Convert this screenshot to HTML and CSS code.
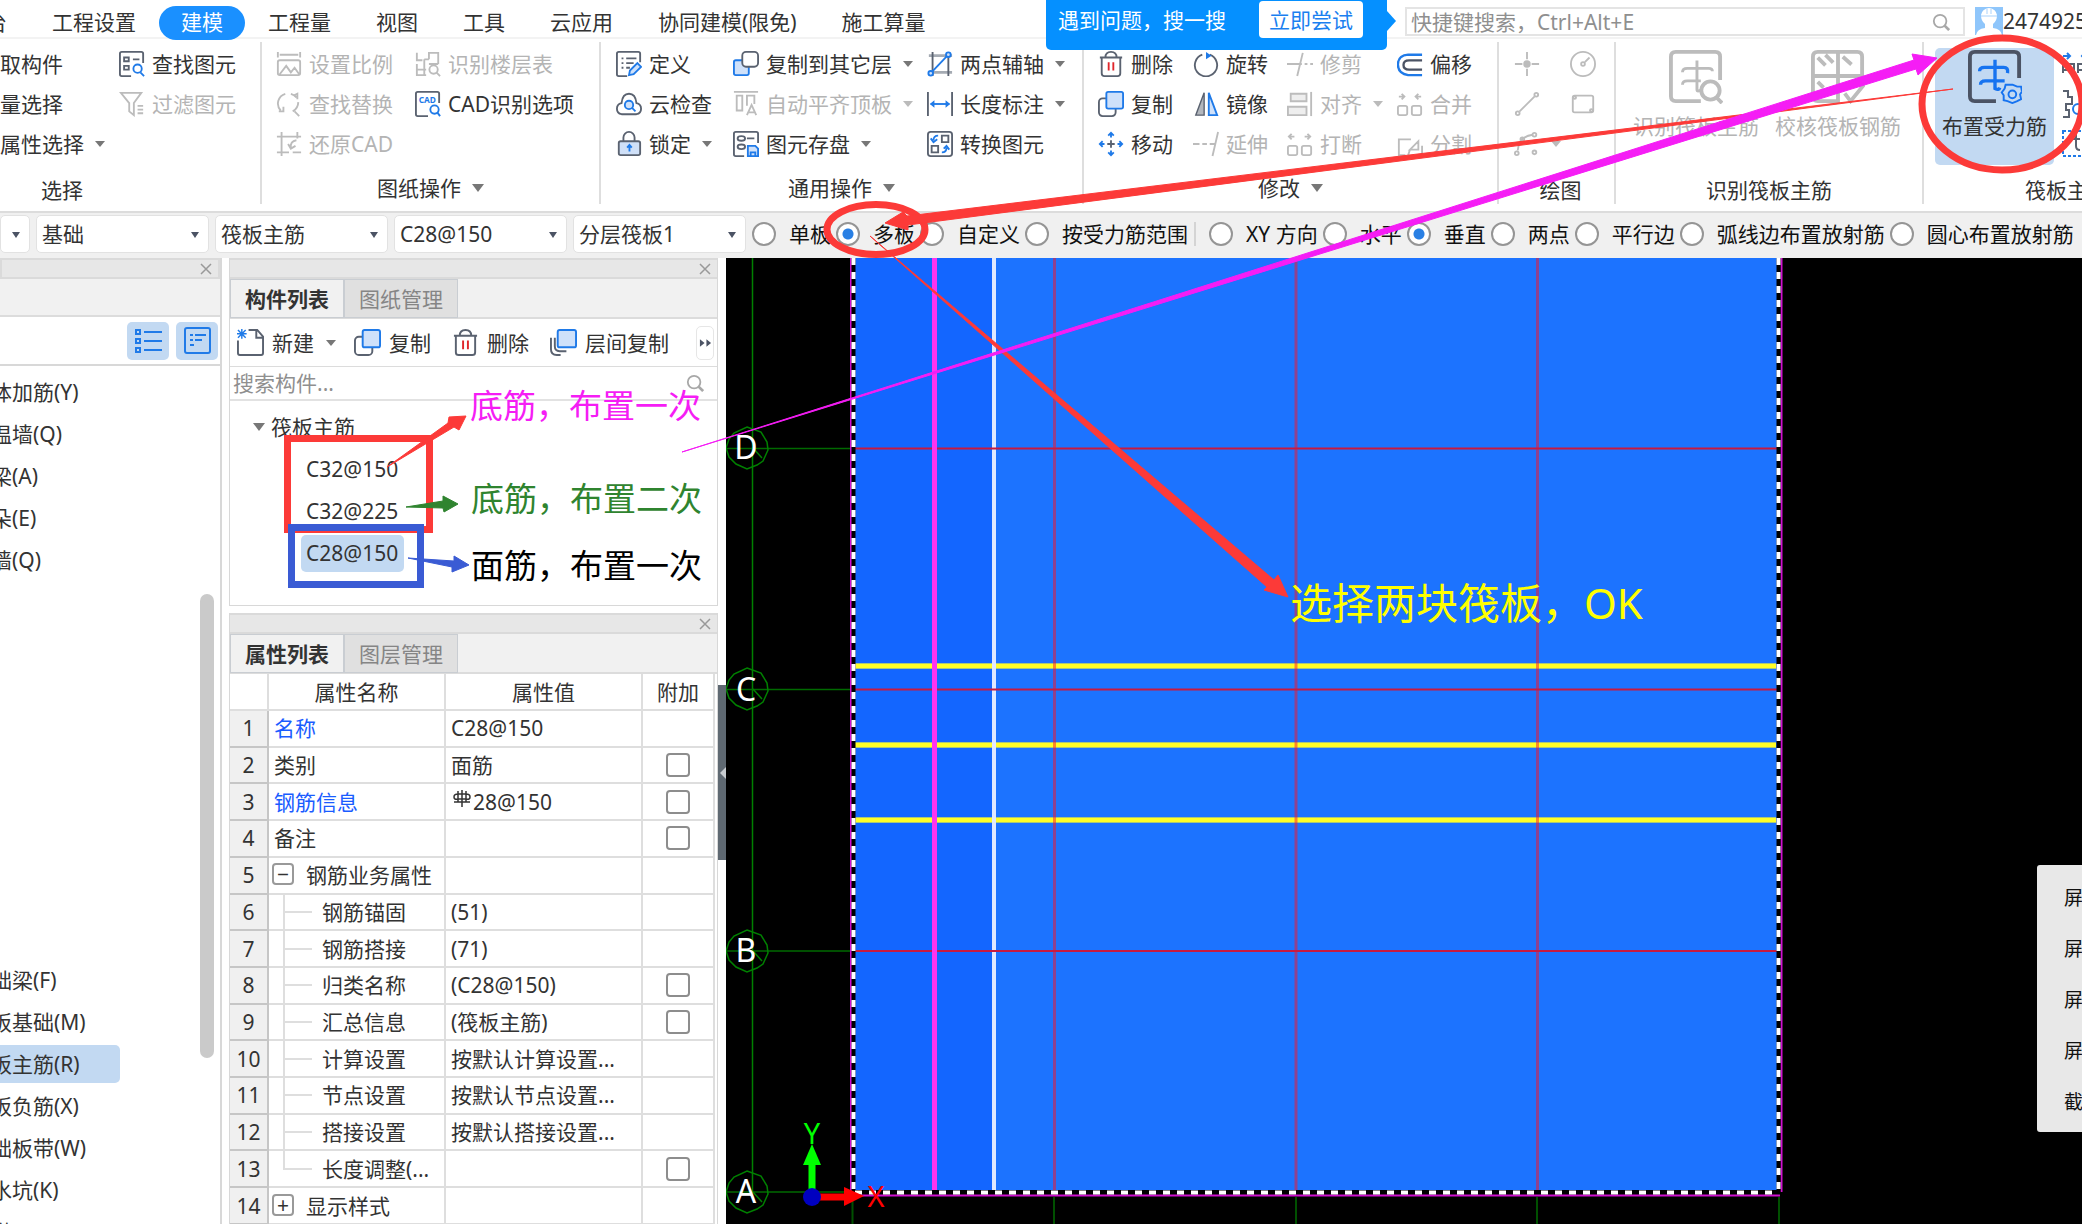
FILE: index.html
```html
<!DOCTYPE html>
<html lang="zh-CN">
<head>
<meta charset="utf-8">
<title>建模 - 筏板主筋</title>
<link rel="stylesheet" href="styles.css">
</head>
<body>
<svg class="defs" aria-hidden="true">
  <symbol id="i-find" viewBox="0 0 28 28"><path d="M26 13V3a2 2 0 0 0-2-2H3a2 2 0 0 0-2 2v22a2 2 0 0 0 2 2h10" class="d"/><path d="M5.500 7h5v4h-5zM5.500 16h5v4h-5zM15 9h7" class="d"/><circle cx="20" cy="19" r="4.500" class="b"/><path d="M23 23l4 4" class="b"/></symbol>
  <symbol id="i-filter" viewBox="0 0 28 28"><path d="M2 2h22l-8 11v13l-5-4v-9zM20 16h6M20 20h6M20 24h6" class="g"/></symbol>
  <symbol id="i-scale" viewBox="0 0 28 28"><path d="M2 1v6M26 1v6M4 4h20M4 10h20q2 0 2 2v12q0 2-2 2H4q-2 0-2-2V12q0-2 2-2zM4 25l7-9 5 7 4-5 5 7" class="g"/></symbol>
  <symbol id="i-floors" viewBox="0 0 28 28"><path d="M2 2v8h6M15 9V2h10v12M15 9h-5M2 14v12h10M2 20h10M10 9v17M15 14h10" class="g"/><circle cx="20" cy="20" r="4.500" class="g"/><path d="M23 23l4 4" class="g"/></symbol>
  <symbol id="i-replace" viewBox="0 0 28 28"><path d="M10 3A11 11 0 0 0 5 21M3 22h5v-5M16 3a11 11 0 0 1 6 4m2 5a12 12 0 0 1-6 10M19 5l4-2v6M20 22l5 5" class="g"/></symbol>
  <symbol id="i-cad" viewBox="0 0 28 28"><path d="M26 13V3a2 2 0 0 0-2-2H3a2 2 0 0 0-2 2v22a2 2 0 0 0 2 2h11" class="d"/><text x="4" y="13" font-size="9" font-weight="700" fill="#1f7ae8">CAD</text><circle cx="21" cy="20" r="4.500" class="b"/><path d="M24 23l3 4" class="b"/></symbol>
  <symbol id="i-restore" viewBox="0 0 28 28"><path d="M1 6h26M6 1v26M1 23h13M18 23h9M23 1v7M22 10q-7 1-6 8M13 14l3 5 5-3" class="g"/></symbol>
  <symbol id="i-define" viewBox="0 0 28 28"><path d="M26 12V3a2 2 0 0 0-2-2H3a2 2 0 0 0-2 2v22a2 2 0 0 0 2 2h9M6 8h2M11 8h11M6 13h2M11 13h8M6 18h2M11 18h4" class="d"/><path d="M14 26l1-5 8-8 4 4-8 8z" class="bf"/></symbol>
  <symbol id="i-cloud" viewBox="0 0 28 28"><path d="M6 25q-5-1-5-6t5-6Q7 3 14 3t8 10q5 1 5 6t-5 6z" class="d"/><circle cx="14" cy="15" r="4.500" class="bf"/><path d="M17 18l4 4" class="b"/></symbol>
  <symbol id="i-lock" viewBox="0 0 28 28"><path d="M8 11V7a6 6 0 0 1 12 0v4" class="d"/><rect x="3" y="11" width="23" height="15" rx="2" class="df"/><path d="M14.500 22v-6M12 18l2.500-3 2.500 3" class="b"/></symbol>
  <symbol id="i-copyup" viewBox="0 0 28 28"><rect x="1" y="10" width="16" height="16" rx="2" class="bf"/><rect x="10" y="1" width="17" height="16" rx="4" class="dw"/></symbol>
  <symbol id="i-align" viewBox="0 0 28 28"><path d="M1 1h26M4 5h6v16H4zM15 16V5h8v9M15 26l5-11 5 11M17 23h6" class="g"/></symbol>
  <symbol id="i-store" viewBox="0 0 28 28"><path d="M27 13V3a2 2 0 0 0-2-2H3a2 2 0 0 0-2 2v22a2 2 0 0 0 2 2h9M15 8h8" class="d"/><ellipse cx="9" cy="8" rx="4" ry="2.500" class="d"/><ellipse cx="9" cy="17" rx="4" ry="2.500" class="d"/><path d="M16 16h8l3 3v8H16zM19 27v-4h5v4" class="bf"/></symbol>
  <symbol id="i-axis" viewBox="0 0 28 28"><path d="M2 5h25M2 23h25" stroke="#a5abb3" stroke-width="3"/><path d="M6 1v26M23 1v26" class="d"/><path d="M3 25L23 4" class="b"/><circle cx="23" cy="4" r="2.500" class="bf"/><circle cx="4" cy="24" r="2.500" class="bf"/></symbol>
  <symbol id="i-length" viewBox="0 0 28 28"><path d="M1 1v26M27 1v26" class="d"/><path d="M4 14h20" class="b"/><path d="M8 10l-5 4 5 4zM20 10l5 4-5 4z" fill="#1f7ae8"/></symbol>
  <symbol id="i-convert" viewBox="0 0 28 28"><rect x="1" y="1" width="26" height="26" rx="3" class="d"/><path d="M16 5h7v7h-7zM5 16h7v7H5z" class="d"/><path d="M12 5q-5 0-5 5M4 8l3 4 4-3M16 23q5 0 5-5M18 19l3-3 3 4" class="b"/></symbol>
  <symbol id="i-trash" viewBox="0 0 28 28"><path d="M2 7h24M8 7q0-6 6-6t6 6M4 7v17q0 3 3 3h14q3 0 3-3V7" class="d"/><path d="M11.500 12v9M16.500 12v9" stroke="#e0262b" stroke-width="2"/></symbol>
  <symbol id="i-copy" viewBox="0 0 28 28"><rect x="1" y="8" width="18" height="19" rx="4" class="d"/><rect x="9" y="1" width="18" height="18" rx="2" class="bf"/></symbol>
  <symbol id="i-move" viewBox="0 0 28 28"><path d="M14 10v8M10 14h8" class="d"/><path d="M14 7V2M11 5l3-3 3 3M14 21v5M11 23l3 3 3-3M7 14H2M5 11l-3 3 3 3M21 14h5M23 11l3 3-3 3" class="b"/></symbol>
  <symbol id="i-rotate" viewBox="0 0 28 28"><path d="M18 4a12 12 0 1 1-8 0" class="d"/><path d="M14 1l6 4-6 4z" fill="#1f7ae8"/></symbol>
  <symbol id="i-mirror" viewBox="0 0 28 28"><path d="M12 2v24H3z" fill="#b3b7bd" stroke="#5a6270" stroke-width="1.500"/><path d="M17 2l9 24h-9z" class="bf"/></symbol>
  <symbol id="i-extend" viewBox="0 0 28 28"><path d="M0 14h7M10 14h5M18 14h6M27 1l-6 26" class="g"/></symbol>
  <symbol id="i-trim" viewBox="0 0 28 28"><path d="M0 14h16M17 2l-6 25M19 14h3M25 14h3" class="g"/></symbol>
  <symbol id="i-alignr" viewBox="0 0 28 28"><path d="M4 3h17v8H4zM1 17h20v9H1z" class="gf"/><path d="M26 1v26" class="g"/></symbol>
  <symbol id="i-break" viewBox="0 0 28 28"><rect x="1" y="16" width="10" height="10" rx="2" class="g"/><rect x="16" y="16" width="10" height="10" rx="2" class="g"/><path d="M8 6H2M5 3L2 6l3 3M19 6h6M22 3l3 3-3 3" class="g"/></symbol>
  <symbol id="i-merge" viewBox="0 0 28 28"><rect x="1" y="16" width="10" height="10" rx="2" class="g"/><rect x="16" y="16" width="10" height="10" rx="2" class="g"/><path d="M2 6h6M5 3l3 3-3 3M26 6h-6M23 3l-3 3 3 3" class="g"/></symbol>
  <symbol id="i-offset" viewBox="0 0 28 28"><path d="M27 4H12Q1 5 1 14.500T12 26h15" stroke="#1f7ae8" stroke-width="2.500" fill="none"/><path d="M27 10H13q-6 0-6 5t6 5h14" stroke="#4b5364" stroke-width="2.500" fill="none"/></symbol>
  <symbol id="i-split" viewBox="0 0 28 28"><path d="M15 9H2v17h7M27 16v10h-7M14 20l9-9v9zM14 20l-2 6" class="g"/></symbol>
  <symbol id="i-point" viewBox="0 0 28 28"><path d="M14 1v8M14 19v8M1 14h8M19 14h8" class="g"/><circle cx="14" cy="14" r="4" fill="#bcbcbc"/></symbol>
  <symbol id="i-circle" viewBox="0 0 28 28"><circle cx="14" cy="14" r="13" class="g"/><circle cx="14" cy="14" r="2" class="g"/><path d="M16 12l5-5" class="g"/></symbol>
  <symbol id="i-line" viewBox="0 0 28 28"><circle cx="24" cy="4" r="2" class="g"/><circle cx="4" cy="24" r="2" class="g"/><path d="M6 22L22 6" class="g"/></symbol>
  <symbol id="i-rect" viewBox="0 0 28 28"><rect x="3" y="5" width="22" height="18" rx="2" class="g"/><circle cx="5" cy="7" r="1.500" class="g"/><circle cx="23" cy="21" r="1.500" class="g"/></symbol>
  <symbol id="i-arc" viewBox="0 0 28 28"><path d="M4 21Q5 6 20 4" class="g"/><circle cx="22" cy="4" r="2" class="g"/><circle cx="3" cy="24" r="2" class="g"/><circle cx="9" cy="9" r="2" class="g"/><circle cx="22" cy="23" r="2" class="g"/></symbol>
  <symbol id="i-new" viewBox="0 0 28 28"><path d="M1 12v13q0 2 2 2h22q2 0 2-2V8l-6-7H12M20 1v8h7" class="d"/><path d="M1 1l8 8M9 1L1 9M5 0v10M0 5h10" stroke="#1f7ae8" stroke-width="1.500"/></symbol>
  <symbol id="i-layers" viewBox="0 0 28 28"><path d="M1 9v12q0 6 6 6h4M5 9v9q0 5 5 5h7" class="d"/><rect x="8" y="1" width="19" height="18" rx="2" class="bf"/></symbol>
  <symbol id="i-search" viewBox="0 0 20 20"><circle cx="9" cy="9" r="7" fill="none" stroke="#a8a8a8" stroke-width="2"/><path d="M14 14l5 5" stroke="#a8a8a8" stroke-width="3"/></symbol>
  <symbol id="i-close" viewBox="0 0 12 12"><path d="M1 1l10 10M11 1L1 11" stroke="#999" stroke-width="1.500"/></symbol>
</svg>

<header class="topbar">
  <nav class="menu">
    <a href="#">台</a><a href="#">工程设置</a><a href="#" class="on">建模</a><a href="#">工程量</a><a href="#">视图</a><a href="#">工具</a><a href="#">云应用</a><a href="#">协同建模(限免)</a><a href="#">施工算量</a>
  </nav>
  <div class="tip"><span>遇到问题，搜一搜</span><button>立即尝试</button></div>
  <label class="quick"><input type="text" placeholder="快捷键搜索，Ctrl+Alt+E" aria-label="快捷键搜索"><svg class="mag"><use href="#i-search"/></svg></label>
  <div class="user">
    <svg viewBox="0 0 28 28"><rect width="28" height="28" fill="#8fc6fb"/><path d="M1 28q1-6 9-7v-4Q6 14 6 8q1-6 8-7 7 1 8 7 0 6-4 9v4q8 1 9 7z" fill="#fff"/><path d="M6 9h16M12 2v5M16 2v5" stroke="#a9d2fb" fill="none"/></svg>
    <span>2474925</span>
  </div>
</header>

<div class="ribbon">
  <section class="group g1">
    <div class="cells">
      <button>取构件</button><button><svg><use href="#i-find"/></svg>查找图元</button>
      <button>量选择</button><button disabled><svg><use href="#i-filter"/></svg>过滤图元</button>
      <button>属性选择<i class="tri"></i></button>
    </div>
    <h2 class="low">选择</h2>
  </section>
  <section class="group g2">
    <div class="cells">
      <button disabled><svg><use href="#i-scale"/></svg>设置比例</button><button disabled><svg><use href="#i-floors"/></svg>识别楼层表</button>
      <button disabled><svg><use href="#i-replace"/></svg>查找替换</button><button><svg><use href="#i-cad"/></svg>CAD识别选项</button>
      <button disabled><svg><use href="#i-restore"/></svg>还原CAD</button>
    </div>
    <h2>图纸操作<i class="tri wide"></i></h2>
  </section>
  <section class="group g3">
    <div class="cells">
      <button><svg><use href="#i-define"/></svg>定义</button><button><svg><use href="#i-copyup"/></svg>复制到其它层<i class="tri"></i></button><button><svg><use href="#i-axis"/></svg>两点辅轴<i class="tri"></i></button>
      <button><svg><use href="#i-cloud"/></svg>云检查</button><button disabled><svg><use href="#i-align"/></svg>自动平齐顶板<i class="tri"></i></button><button><svg><use href="#i-length"/></svg>长度标注<i class="tri"></i></button>
      <button><svg><use href="#i-lock"/></svg>锁定<i class="tri"></i></button><button><svg><use href="#i-store"/></svg>图元存盘<i class="tri"></i></button><button><svg><use href="#i-convert"/></svg>转换图元</button>
    </div>
    <h2>通用操作<i class="tri wide"></i></h2>
  </section>
  <section class="group g4">
    <div class="cells">
      <button><svg><use href="#i-trash"/></svg>删除</button><button><svg><use href="#i-rotate"/></svg>旋转</button><button disabled><svg><use href="#i-trim"/></svg>修剪</button><button><svg><use href="#i-offset"/></svg>偏移</button>
      <button><svg><use href="#i-copy"/></svg>复制</button><button><svg><use href="#i-mirror"/></svg>镜像</button><button disabled><svg><use href="#i-alignr"/></svg>对齐<i class="tri"></i></button><button disabled><svg><use href="#i-merge"/></svg>合并</button>
      <button><svg><use href="#i-move"/></svg>移动</button><button disabled><svg><use href="#i-extend"/></svg>延伸</button><button disabled><svg><use href="#i-break"/></svg>打断</button><button disabled><svg><use href="#i-split"/></svg>分割</button>
    </div>
    <h2>修改<i class="tri wide"></i></h2>
  </section>
  <section class="group g5">
    <div class="cells">
      <button disabled aria-label="点"><svg><use href="#i-point"/></svg></button><button disabled aria-label="圆"><svg><use href="#i-circle"/></svg></button>
      <button disabled aria-label="直线"><svg><use href="#i-line"/></svg></button><button disabled aria-label="矩形"><svg><use href="#i-rect"/></svg></button>
      <button disabled aria-label="弧"><svg><use href="#i-arc"/></svg><i class="tri"></i></button>
    </div>
    <h2 class="low">绘图</h2>
  </section>
  <section class="group g6">
    <div class="bigs">
      <button class="big" disabled>
        <svg viewBox="0 0 56 56" fill="none" stroke="#bcbcbc" stroke-width="4"><path d="M53 31V7q0-5-5-5H7Q2 2 2 7v41q0 5 5 5h26"/><path d="M29 11v30q0 3 5 0M14 23q0-4 5-4h22q4 0 4 3M14 36q0-4 5-4h14" stroke-width="3"/><circle cx="43" cy="42" r="9.500"/><path d="M49 49l6 6"/></svg>
        识别筏板主筋</button>
      <button class="big" disabled>
        <svg viewBox="0 0 56 56" fill="none" stroke="#bcbcbc" stroke-width="4"><path d="M53 36V7q0-5-5-5H7Q2 2 2 7v41q0 5 5 5h21V2M2 27h51M7 8l8 8M15 5l8 8M33 7l9 8M7 33l6 6M35 45l6 8 14-17"/></svg>
        校核筏板钢筋</button>
    </div>
    <h2 class="low">识别筏板主筋</h2>
  </section>
  <section class="group g7">
    <div class="bigs">
      <button class="big active">
        <svg viewBox="0 0 56 56" fill="none" stroke="#4b5364" stroke-width="4"><path d="M53 29V7q0-5-5-5H7Q2 2 2 7v41q0 5 5 5h22"/><path d="M28 10v30q4 2 5-1M12 22q0-4 5-4h20q5 0 4 6M13 36q0-4 5-4h20" stroke="#1673f0" stroke-width="3.500"/><path d="M46 36l5 2 4 0 1 5-2 3 1 5-4 2-5 2-5-2-4-1 0-5-2-3 3-4 1-4z" stroke="#1673f0" stroke-width="2"/><circle cx="46" cy="46" r="4" stroke="#1673f0" stroke-width="2"/></svg>
        布置受力筋</button>
      <div class="side">
        <svg viewBox="0 0 28 28"><path d="M1 6h6M5 3l3 3-3 3M26 6h-6M23 3l-3 3 3 3" class="b"/><path d="M1 23V14h11v9M16 23V14h11v9M1 20h11M16 20h11" class="d"/></svg>
        <svg viewBox="0 0 28 28"><path d="M1 1h5v6h4v7H4v6h3v7H1" class="d"/><circle cx="16" cy="19" r="5" class="b"/></svg>
        <svg viewBox="0 0 28 28"><rect x="1" y="1" width="34" height="25" class="b" stroke-dasharray="3 2"/><path d="M14 4v12q0 4 4 4M10 9h8" class="d"/></svg>
      </div>
    </div>
    <h2 class="low">筏板主筋</h2>
  </section>
</div>

<form class="options">
  <span class="sel first"><select aria-label="楼层"><option></option></select></span>
  <span class="sel"><select aria-label="构件大类"><option>基础</option></select></span>
  <span class="sel"><select aria-label="构件类型"><option>筏板主筋</option></select></span>
  <span class="sel"><select aria-label="构件"><option>C28@150</option></select></span>
  <span class="sel"><select aria-label="分层"><option>分层筏板1</option></select></span>
  <div class="radios">
    <label><input type="radio" name="range">单板</label>
    <label><input type="radio" name="range" checked>多板</label>
    <label><input type="radio" name="range">自定义</label>
    <label><input type="radio" name="range">按受力筋范围</label>
  </div>
  <div class="radios way">
    <label><input type="radio" name="way">XY 方向</label>
    <label><input type="radio" name="way">水平</label>
    <label><input type="radio" name="way" checked>垂直</label>
    <label><input type="radio" name="way">两点</label>
    <label><input type="radio" name="way">平行边</label>
    <label><input type="radio" name="way">弧线边布置放射筋</label>
    <label><input type="radio" name="way">圆心布置放射筋</label>
  </div>
</form>

<main class="work">
  <aside class="nav">
    <div class="cap"><svg class="x"><use href="#i-close"/></svg></div>
    <div class="strip"></div>
    <div class="views">
      <button aria-label="列表"><svg viewBox="0 0 28 28"><path d="M10 5h18M10 14h18M10 23h18" class="b"/><path d="M2 3h4v4H2zM2 12h4v4H2zM2 21h4v4H2z" class="b"/></svg></button>
      <button aria-label="详情"><svg viewBox="0 0 28 28"><rect x="2" y="1" width="25" height="25" rx="2" class="b"/><path d="M7 8h3M12 8h11M7 13h3M12 13h7M7 18h4" class="b"/></svg></button>
    </div>
    <div class="tree">
      <ul><li>体加筋(Y)</li><li>温墙(Q)</li><li>梁(A)</li><li>朵(E)</li><li>墙(Q)</li></ul>
      <ul><li>础梁(F)</li><li>板基础(M)</li><li class="cur">板主筋(R)</li><li>板负筋(X)</li><li>础板带(W)</li><li>水坑(K)</li><li>墩(D)</li></ul>
      <span class="thumb"></span>
    </div>
  </aside>

  <div class="mid">
    <section class="panel list">
      <div class="cap"><svg class="x"><use href="#i-close"/></svg></div>
      <div class="tabs"><button class="on">构件列表</button><button>图纸管理</button></div>
      <div class="tools">
        <button><svg><use href="#i-new"/></svg>新建<i class="tri"></i></button>
        <button><svg><use href="#i-copy"/></svg>复制</button>
        <button><svg><use href="#i-trash"/></svg>删除</button>
        <button><svg><use href="#i-layers"/></svg>层间复制</button>
        <button class="more" aria-label="更多"><svg viewBox="0 0 14 10"><path d="M1 1l5 4-5 4zM8 1l5 4-5 4z" fill="#4b5364"/></svg></button>
      </div>
      <label class="find"><input type="text" placeholder="搜索构件..." aria-label="搜索构件"><svg class="mag"><use href="#i-search"/></svg></label>
      <div class="parts">
        <p><i class="tri wide"></i>筏板主筋</p>
        <ul><li>C32@150</li><li>C32@225</li><li><mark>C28@150</mark></li></ul>
      </div>
    </section>

    <section class="panel props">
      <div class="cap"><svg class="x"><use href="#i-close"/></svg></div>
      <div class="tabs"><button class="on">属性列表</button><button>图层管理</button></div>
      <table>
        <thead><tr><th></th><th>属性名称</th><th>属性值</th><th>附加</th></tr></thead>
        <tbody>
          <tr><th>1</th><td class="link">名称</td><td>C28@150</td><td></td></tr>
          <tr><th>2</th><td>类别</td><td>面筋</td><td><input type="checkbox" aria-label="类别附加"></td></tr>
          <tr><th>3</th><td class="link">钢筋信息</td><td><svg class="bar" viewBox="0 0 18 18"><path d="M9 0v17M1 12h16M5 1v11M13 1v11M5 4q-4 0-4 3t4 2h8q4 1 4-2t-4-3z" fill="none" stroke="#333" stroke-width="1.500"/></svg>28@150</td><td><input type="checkbox" aria-label="钢筋信息附加"></td></tr>
          <tr><th>4</th><td>备注</td><td></td><td><input type="checkbox" aria-label="备注附加"></td></tr>
          <tr><th>5</th><td><button class="fold">−</button>钢筋业务属性</td><td></td><td></td></tr>
          <tr class="sub"><th>6</th><td>钢筋锚固</td><td>(51)</td><td></td></tr>
          <tr class="sub"><th>7</th><td>钢筋搭接</td><td>(71)</td><td></td></tr>
          <tr class="sub"><th>8</th><td>归类名称</td><td>(C28@150)</td><td><input type="checkbox" aria-label="归类名称附加"></td></tr>
          <tr class="sub"><th>9</th><td>汇总信息</td><td>(筏板主筋)</td><td><input type="checkbox" aria-label="汇总信息附加"></td></tr>
          <tr class="sub"><th>10</th><td>计算设置</td><td>按默认计算设置...</td><td></td></tr>
          <tr class="sub"><th>11</th><td>节点设置</td><td>按默认节点设置...</td><td></td></tr>
          <tr class="sub"><th>12</th><td>搭接设置</td><td>按默认搭接设置...</td><td></td></tr>
          <tr class="sub last"><th>13</th><td>长度调整(...</td><td></td><td><input type="checkbox" aria-label="长度调整附加"></td></tr>
          <tr><th>14</th><td><button class="fold">+</button>显示样式</td><td></td><td></td></tr>
        </tbody>
      </table>
    </section>
  </div>

  <div class="splitter"><button aria-label="收起"></button></div>

  <div class="stage">
    <svg class="drawing" viewBox="726 258 1356 966" preserveAspectRatio="xMinYMin slice">
      <rect x="855" y="258" width="139" height="933" fill="#1366ff"/>
      <rect x="994" y="258" width="783" height="933" fill="#1c73ff"/>
      <g stroke="#008000" stroke-width="1.500" fill="none">
        <path d="M752.500 258V1192"/>
        <path d="M726 448.500H851M726 689.500H851M726 951H851M726 1192H851" stroke="#006a00"/>
        <path d="M852.500 1197V1224M1054 1197V1224M1296 1197V1224M1537 1197V1224M1779 1197V1224" stroke="#005000" stroke-width="2"/>
        <g id="ring"><path d="M747 427l14 5 6 10 1 8-5 11-6 4-10 4-11-5-7-7-3-9 3-9 5-6zM753 448l9 10"/></g>
        <use href="#ring" y="241"/><use href="#ring" y="503"/><use href="#ring" y="744"/>
      </g>
      <g class="axis"><text x="746" y="459">D</text><text x="746" y="701">C</text><text x="746" y="962">B</text><text x="746" y="1203">A</text></g>
      <path d="M855 666H1776M855 745H1776M855 820H1776" stroke="#a9c878" stroke-width="6"/>
      <path d="M855 666H1776M855 745H1776M855 820H1776" stroke="#ffff28" stroke-width="4"/>
      <path d="M994 258V1191" stroke="#e0e9ff" stroke-width="4"/>
      <path d="M1054.500 258V1191M1296 258V1191M1537.500 258V1191" stroke="#ff1020" stroke-opacity=".5" stroke-width="3"/>
      <path d="M855 448.500H1777M855 689.500H1777M855 951H1777" stroke="#c81a40" stroke-width="2"/>
      <path d="M934.500 258V1191" stroke="#ff33f0" stroke-width="5"/>
      <path d="M851 258V1192M1781.500 258V1192M853 1195.500H1780" stroke="#d010d0" stroke-width="2" fill="none"/>
      <path d="M853.500 258V1192H1778.500V258" stroke="#000" stroke-width="4" fill="none"/>
      <path d="M853.500 258V1192M1778.500 258V1192M855 1192.500H1777" stroke="#fff" stroke-width="4" stroke-dasharray="7 7" fill="none"/>
      <path d="M812 1190V1164" stroke="#0f0" stroke-width="7"/><path d="M803 1165l9-21 9 21z" fill="#0f0"/>
      <path d="M820 1197H846" stroke="#f00" stroke-width="7"/><path d="M844 1187l20 9-20 10z" fill="#f00"/>
      <circle cx="812" cy="1197" r="9" fill="#0000c0"/>
      <g class="axis xy"><text x="812" y="1144" fill="#0f0">Y</text><text x="876" y="1207" fill="#f00">X</text></g>
    </svg>
    <ul class="popup"><li>屏</li><li>屏</li><li>屏</li><li>屏</li><li>截</li></ul>
  </div>
</main>

<svg class="notes" viewBox="0 0 2082 1224" preserveAspectRatio="xMinYMin slice">
  <g fill="none" stroke-width="7">
    <rect x="287.500" y="438.500" width="142" height="91" stroke="#fc3a38"/>
    <rect x="291.500" y="527.500" width="129" height="57" stroke="#3a5bd4"/>
    <ellipse cx="876" cy="229.500" rx="49" ry="25" stroke="#fc3a38"/>
    <ellipse cx="2002" cy="104" rx="80" ry="66" stroke="#fc3a38"/>
  </g>
  <g fill="#fc3a38" stroke="#fc3a38">
    <path d="M387 467L448 423 449 417 466 416 459 430 454 427Z"/>
    <path d="M1953 89L907 216 903 212 885 223 908 230 908 225Z"/>
    <path d="M870 236L1274 580 1278 575 1288 597 1264 590 1267 587Z"/>
  </g>
  <path d="M682 452L1914 60 1912 54 1937 58 1918 75 1916 69Z" fill="#f51df5" stroke="#f51df5"/>
  <path d="M406 507L443 501 443 496 458 504 444 512 443 508Z" fill="#2f842f" stroke="#2f842f"/>
  <path d="M408 558L454 561 454 556 469 565 452 572 452 567Z" fill="#3a5bd4" stroke="#3a5bd4"/>
  <g class="memo"><text x="470" y="418" fill="#f51df5">底筋，布置一次</text><text x="471" y="511" fill="#2f842f">底筋，布置二次</text><text x="471" y="578" fill="#000">面筋，布置一次</text><text x="1290" y="619" fill="#ff0" class="lg">选择两块筏板，OK</text></g>
</svg>
</body>
</html>
```

FILE: styles.css
```css
* { box-sizing: border-box; }
body {
  margin: 0;
  height: 100vh;
  overflow: hidden;
  position: relative;
  display: flex;
  flex-direction: column;
  background: #fff;
  color: #333;
  font: 21px/24px "Noto Sans", "Noto Sans CJK SC", sans-serif;
}
button, input, select { font: inherit; color: inherit; margin: 0; padding: 0; border: 0; background: none; }
button { white-space: nowrap; }
ul, p, h2 { margin: 0; padding: 0; list-style: none; font: inherit; }
a { color: inherit; text-decoration: none; }
.defs { position: absolute; width: 0; height: 0; }

/* icon strokes */
.d, .df, .dw { fill: none; stroke: #5a6270; stroke-width: 2; }
.df { fill: #cfe0f8; }
.dw { fill: #fff; }
.b, .bf { fill: none; stroke: #1f7ae8; stroke-width: 2; }
.bf { fill: #cfe1fa; }
.g, .gf { fill: none; stroke: #bcbcbc; stroke-width: 2; }
.gf { fill: #eee; }
.tri { display: inline-block; border: 5px solid transparent; border-top: 6px solid #777; border-bottom: 0; flex: none; }
.tri.wide { border-width: 8px 6px 0; }
:disabled .tri { border-top-color: #bbb; }

/* top bar */
.topbar { flex: none; position: relative; z-index: 2; height: 39px; display: flex; border-bottom: 2px solid #f3f3f3; }
.menu { display: flex; gap: 1px; margin-left: -36px; padding-top: 6px; flex: none; }
.menu a { height: 34px; padding: 4px 22px; border-radius: 17px; white-space: nowrap; }
.menu .on { background: #1a90ff; color: #fff; }
.tip { position: absolute; left: 1046px; top: 0; width: 341px; height: 50px; padding: 1px 24px 0 12px; display: flex; justify-content: space-between; background: #0590ff; color: #fff; border-radius: 0 0 5px 5px; }
.tip span { line-height: 38px; }
.tip button { width: 104px; height: 37px; background: #fff; color: #1a7ff0; border-radius: 4px; }
.tip::after { content: ""; position: absolute; left: 100%; top: 11px; border: 10px solid transparent; border-left: 9px solid #0590ff; border-right: 0; }
.quick { margin: 7px 10px 0 auto; width: 560px; height: 29px; display: flex; align-items: center; border: 2px solid #e4e4e4; padding: 0 13px 0 4px; flex: none; }
.quick input, .find input { flex: 1; min-width: 0; outline: 0; }
::placeholder { color: #8f8f8f; opacity: 1; }
.mag { width: 18px; height: 18px; flex: none; }
.user { width: 107px; display: flex; padding-top: 7px; overflow: hidden; flex: none; }
.user svg { width: 28px; height: 28px; flex: none; }
.user span { padding-top: 2px; }

/* ribbon */
.ribbon { flex: none; height: 174px; display: flex; padding-top: 3px; border-bottom: 2px solid #dcdcdc; overflow: hidden; }
.group { flex: none; height: 162px; padding-top: 2px; display: flex; flex-direction: column; border-right: 2px solid #dedede; }
.cells { height: 120px; display: grid; grid-template-rows: repeat(3, 40px); }
.cells button { display: flex; align-items: center; gap: 7px; }
.cells svg { width: 26px; height: 26px; flex: none; }
.cells .tri { margin-left: 4px; }
.ribbon :disabled { color: #b4b4b4; }
.group h2 { display: flex; justify-content: center; align-items: center; gap: 11px; padding-top: 12px; }
.group h2.low { padding-top: 14px; }
.g1 .cells { grid-template-columns: 119px 141px; }
.g1 h2 { padding-right: 136px; }
.g2 .cells { grid-template-columns: 139px 184px; padding-left: 14px; }
.g3 .cells { grid-template-columns: 117px 194px 155px; padding-left: 15px; }
.g4 .cells { grid-template-columns: 95px 94px 110px 100px; padding-left: 14px; }
.g5 .cells { grid-template-columns: 56px 44px; padding-left: 15px; }
.g5 h2 { padding-left: 8px; }
.g6 .bigs { padding: 0 13px 0 9px; }
.g7 { border: 0; }
.g7 h2 { width: 286px; }
.g7 .bigs { padding-left: 11px; gap: 8px; }
.bigs { height: 120px; display: flex; }
.big { display: flex; flex-direction: column; align-items: center; gap: 10px; width: 142px; height: 117px; padding-top: 2px; margin-top: 4px; border-radius: 5px; }
.big svg { width: 54px; height: 54px; flex: none; }
.big.active { width: 119px; background: #c2d9f2; color: #333; }
.side svg { display: block; width: 28px; height: 28px; margin: 6px 0 12px; overflow: visible; }

/* option bar */
.options { flex: none; height: 45px; display: flex; gap: 6px; padding-bottom: 3px; background: #f0f0f0; align-items: center; margin: 0; overflow: hidden; }
.sel { position: relative; width: 173px; height: 38px; flex: none; }
.sel.first { width: 30px; }
.sel select { appearance: none; width: 100%; height: 100%; padding: 0 5px; background: #fff; border: 1px solid #e2e2e2; border-radius: 5px; }
.sel::after { content: ""; position: absolute; right: 10px; top: 17px; border: 4px solid transparent; border-top: 6px solid #4b5364; border-bottom: 0; }
.radios { display: flex; gap: 5px; align-items: center; color: #111; flex: none; }
.radios label { display: flex; align-items: center; gap: 13px; white-space: nowrap; }
.radios input { appearance: none; width: 24px; height: 24px; border: 2px solid #959595; border-radius: 50%; background: #fff; }
.radios input:checked { background: radial-gradient(circle, #2a80e4 5px, #fff 6px); }
.way { border-left: 2px solid #d4d4d4; padding-left: 13px; }

/* work area */
.work { flex: 1; min-height: 0; display: grid; grid-template-columns: 222px 496px 8px minmax(0, 1fr); }
.cap { height: 21px; background: #e7e7e7; border: 2px solid #dadada; display: flex; justify-content: flex-end; align-items: center; padding-right: 6px; flex: none; }
.x { width: 12px; height: 12px; }
.nav { display: flex; flex-direction: column; border-right: 2px solid #d8d8d8; overflow: hidden; min-height: 0; }
.strip { height: 38px; background: #f1f1f1; border-bottom: 2px solid #dcdcdc; flex: none; }
.views { height: 49px; display: flex; justify-content: flex-end; gap: 7px; padding: 5px 2px; border-bottom: 2px solid #d8d8d8; flex: none; }
.views button { width: 42px; height: 38px; background: #c2d9f2; border-radius: 5px; }
.views svg { width: 28px; height: 28px; display: block; margin: auto; }
.tree { position: relative; padding-top: 5px; }
.tree ul + ul { margin-top: 378px; }
.tree li { height: 42px; line-height: 42px; margin-left: -9px; white-space: nowrap; }
.tree .cur { height: 38px; line-height: 38px; width: 129px; margin-top: 2px; margin-bottom: 2px; background: #c2d9f2; border-radius: 5px; }
.thumb { position: absolute; right: 6px; top: 228px; width: 14px; height: 464px; border-radius: 7px; background: #cacaca; }
.mid { display: flex; flex-direction: column; gap: 7px; padding-left: 7px; min-height: 0; }
.panel { border: 1px solid #d8d8d8; border-top: 0; flex: none; }
.panel .cap { border-left: 0; border-right: 0; }
.list { height: 348px; }
.tabs { height: 40px; display: flex; background: #f1f1f1; border-bottom: 2px solid #dcdcdc; }
.tabs button { width: 114px; height: 39px; background: #e0e0e0; color: #858585; border: 1px solid #c9cdd2; }
.tabs .on { background: #f1f1f1; color: #333; font-weight: 700; }
.tools { height: 48px; display: flex; align-items: center; padding-left: 7px; border-bottom: 1px solid #dcdcdc; }
.tools button { display: flex; align-items: center; gap: 8px; margin-right: 21px; }
.tools svg { width: 27px; height: 27px; }
.tools .tri { margin: 0 -3px 0 4px; }
.tools .more { width: 18px; height: 34px; margin: 0 3px 0 auto; border: 1px solid #e6e6e6; border-radius: 5px; justify-content: center; }
.tools .more svg { width: 13px; height: 10px; flex: none; }
.find { height: 34px; display: flex; align-items: center; padding: 0 13px 0 3px; border-bottom: 2px solid #e2e2e2; }
.parts { padding-top: 5px; line-height: 42px; }
.parts p { display: flex; align-items: center; gap: 6px; padding-left: 23px; }
.parts li { padding-left: 76px; height: 42px; }
.parts li mark { display: inline-block; height: 37px; line-height: 37px; margin-left: -5px; padding: 0 6px 0 5px; background: #c2d9f2; color: inherit; border-radius: 5px; }

/* property table */
.props table { width: 485px; height: 551px; border-collapse: collapse; table-layout: fixed; border-right: 1px solid #dcdcdc; }
.props td, .props th { height: 36px; padding: 0 0 0 5px; border: 2px solid #dedede; border-top: 0; font-weight: 400; text-align: left; white-space: nowrap; }
.props th { text-align: center; padding: 0; }
.props th:nth-child(1) { width: 38px; border-left: 0; }
.props th:nth-child(2) { width: 177px; }
.props th:nth-child(4) { width: 72px; }
.props tbody th { background: #f0f0f0; border-color: #c6c6c6; }
.props td:last-child { text-align: center; padding: 0; }
.props .link { color: #1a5cff; }
.props input { appearance: none; display: block; width: 24px; height: 24px; margin: auto; border: 2px solid #8d8d8d; border-radius: 4px; background: #fff; }
.fold { width: 22px; height: 22px; line-height: 16px; margin: 0 12px 0 -2px; border: 2px solid #999; border-radius: 4px; vertical-align: 1px; }
.bar { width: 18px; height: 18px; margin: 0 2px; vertical-align: 2px; }
.sub td:nth-child(2) {
  padding-left: 53px;
  background: linear-gradient(#dedede, #dedede) 14px 0 / 2px 100% no-repeat, linear-gradient(#dedede, #dedede) 14px 50% / 29px 2px no-repeat;
}
.sub.last td:nth-child(2) { background-size: 2px 50%, 29px 2px; }

.splitter { padding-top: 427px; }
.splitter button { display: block; width: 8px; height: 175px; background: #5f6972; }
.splitter button::before { content: ""; display: block; border: 6px solid transparent; border-right: 6px solid #c8ccd0; border-left: 0; margin-left: 2px; width: 0; }

.stage { position: relative; background: #000; overflow: hidden; min-height: 0; }
.drawing { display: block; width: 100%; height: 100%; }
.axis { font-size: 32px; fill: #fff; text-anchor: middle; }
.xy { font-size: 29px; }
.popup { position: absolute; right: 0; top: 607px; width: 45px; height: 267px; padding: 8px 0 0 27px; background: #e8e8e8; border-radius: 3px 0 0 3px; color: #111; font-size: 19px; line-height: 51px; overflow: hidden; }

/* hand-drawn marks over the window */
.notes { position: absolute; inset: 0; width: 100%; height: 100%; pointer-events: none; z-index: 3; }
.memo { font-size: 33px; }
.memo .lg { font-size: 42px; }
```
